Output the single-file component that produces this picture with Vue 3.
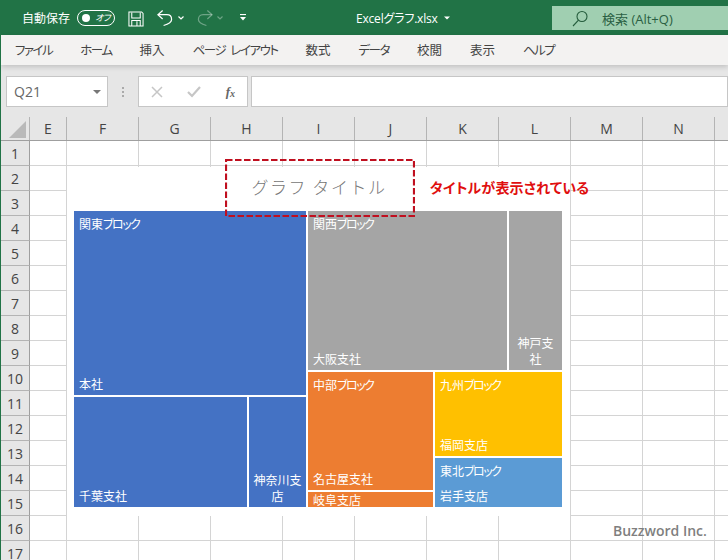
<template>
  <div class="app">
    <!-- タイトルバー -->
    <header class="titlebar">
      <span class="autosave">自動保存</span>
      <span class="toggle"><i class="knob" /><em>オフ</em></span>
      <svg class="qa save" width="16" height="16" viewBox="0 0 17 17" fill="none" stroke="#fff" stroke-width="1.100">
        <path d="M1 1h13.500l1.500 1.500V16H1z" />
        <path d="M4 1.500v6h9v-6M4 16v-6h9v6M9.500 11v5" />
      </svg>
      <svg class="qa undo" width="16" height="18" viewBox="0 0 17 18" fill="none" stroke="#fff" stroke-width="1.300">
        <path d="M6 1L1 5.500 6 10" />
        <path d="M1 5.500h9.500c3.500 0 5 2.500 5 5 0 3-3.500 5-8.500 6.500" />
      </svg>
      <svg class="caret" width="6" height="4" viewBox="0 0 6 4" fill="none" stroke="#fff" stroke-width="1.200"><path d="M.5.500L3 3l2.500-2.500" /></svg>
      <svg class="qa redo" width="16" height="18" viewBox="0 0 17 18" fill="none" stroke="#fff" stroke-opacity=".35" stroke-width="1.300">
        <path d="M11 1l5 4.500L11 10" />
        <path d="M16 5.500H6.500c-3.500 0-5 2.500-5 5 0 3 3.500 5 8.500 6.500" />
      </svg>
      <svg class="caret dim" width="6" height="4" viewBox="0 0 6 4" fill="none" stroke="#fff" stroke-opacity=".35" stroke-width="1.200"><path d="M.5.500L3 3l2.500-2.500" /></svg>
      <svg class="more" width="6" height="7" viewBox="0 0 6 7" fill="#fff"><rect width="6" height="1.100" /><path d="M0 3h6L3 6.500z" /></svg>
      <span class="filename">Excelグラフ.xlsx</span>
      <svg class="fileCaret" width="6" height="4" viewBox="0 0 6 4" fill="#fff"><path d="M0 .5h6L3 3.500z" /></svg>
      <div class="search">
        <svg width="16" height="17" viewBox="0 0 16 17" fill="none" stroke="#245c3c" stroke-width="1.100">
          <circle cx="10" cy="6.500" r="5" /><path d="M6.500 10.200L1 16" />
        </svg>
        <span>検索 (Alt+Q)</span>
      </div>
    </header>

    <!-- リボンのタブ -->
    <nav class="tabs">
      <span
        v-for="tab in tabs"
        :key="tab"
        class="tab"
        :class="{ kana: /[ァ-ヶ]/.test(tab) }"
      >{{ tab }}</span>
    </nav>

    <!-- 数式バー -->
    <div class="formula">
      <div class="namebox">
        <span>Q21</span>
        <svg width="8" height="4" viewBox="0 0 8 4" fill="#777"><path d="M0 0h8L4 4z" /></svg>
      </div>
      <div class="dots"><i /><i /><i /></div>
      <div class="fxbox">
        <svg width="12" height="12" viewBox="0 0 12 12" stroke="#c6c6c6" stroke-width="1.500"><path d="M1 1l10 10M11 1L1 11" /></svg>
        <svg width="14" height="12" viewBox="0 0 14 12" fill="none" stroke="#c6c6c6" stroke-width="2.200"><path d="M1 6l4 4 8-9" /></svg>
        <span class="fx">f<sub>x</sub></span>
      </div>
      <div class="input" />
    </div>

    <!-- シート -->
    <div class="sheet">
      <div class="colhead">
        <div class="corner"><svg width="17" height="17" viewBox="0 0 17 17" fill="#b9b9b9"><path d="M17 0v17H0z" /></svg></div>
        <div
          v-for="c in cols"
          :key="c.name"
          class="colname"
          :style="{ width: c.width + 'px' }"
        >{{ c.name }}</div>
      </div>
      <div v-for="r in rows" :key="r" class="row">
        <div class="rowname">{{ r }}</div>
        <div
          v-for="c in cols"
          :key="c.name"
          class="cell"
          :style="{ width: c.width + 'px' }"
        />
      </div>

      <!-- グラフ -->
      <div class="chart">
        <div class="title">グラフ タイトル</div>
        <div class="treemap">
          <div class="col left">
            <div class="tile blue honsha">
              <span>関東<i>ブロック</i></span><span>本社</span>
            </div>
            <div class="line fill">
              <div class="tile blue chiba"><span /><span>千葉支社</span></div>
              <div class="tile blue kanagawa"><span /><span class="wrap">神奈川支店</span></div>
            </div>
          </div>
          <div class="col right">
            <div class="line gray-row">
              <div class="tile gray osaka"><span>関西<i>ブロック</i></span><span>大阪支社</span></div>
              <div class="tile gray kobe"><span /><span class="wrap">神戸支社</span></div>
            </div>
            <div class="line fill">
              <div class="col orange-col">
                <div class="tile orange nagoya"><span>中部<i>ブロック</i></span><span>名古屋支社</span></div>
                <div class="tile orange gifu"><span>岐阜支店</span></div>
              </div>
              <div class="col last-col">
                <div class="tile yellow kyushu"><span>九州<i>ブロック</i></span><span>福岡支店</span></div>
                <div class="tile sky tohoku"><span>東北<i>ブロック</i></span><span>岩手支店</span></div>
              </div>
            </div>
          </div>
        </div>
      </div>

      <!-- 注釈 -->
      <svg class="dashed" width="190" height="58" viewBox="0 0 190 58" fill="none">
        <rect x="1" y="1" width="188" height="56" stroke="#c00f1f" stroke-width="2.200" stroke-dasharray="6.500 2.500" />
      </svg>
      <div class="note">タイトルが表示されている</div>
      <div class="mark">Buzzword Inc.</div>
    </div>
  </div>
</template>

<script setup>
const tabs = ['ファイル', 'ホーム', '挿入', 'ページ レイアウト', '数式', 'データ', '校閲', '表示', 'ヘルプ']

const cols = [
  { name: 'E', width: 37 },
  ...['F', 'G', 'H', 'I', 'J', 'K', 'L', 'M', 'N'].map((name) => ({ name, width: 72 })),
  { name: '', width: 40 }
]

const rows = Array.from({ length: 17 }, (_, i) => i + 1)
</script>

<style>
html, body { margin: 0; background: #fff; }
</style>

<style scoped>
.app {
  width: 728px;
  height: 560px;
  overflow: hidden;
  display: flex;
  flex-direction: column;
  font-family: "Noto Sans CJK JP", "Noto Sans", sans-serif;
  font-feature-settings: "palt";
  border-left: 1px solid #217346;
  box-sizing: border-box;
}

/* title bar */
.titlebar {
  height: 35px;
  margin-left: -1px;
  flex: none;
  background: #217346;
  color: #fff;
  display: flex;
  align-items: center;
  font-size: 12px;
}
.autosave { margin-left: 22px; font-feature-settings: normal; }
.toggle {
  margin-left: 7px;
  height: 14px;
  border: 1px solid #fff;
  border-radius: 8px;
  display: flex;
  align-items: center;
  justify-content: space-between;
  padding: 0 4px;
  width: 28px;
}
.knob { width: 8px; height: 8px; border-radius: 50%; background: #fff; }
.toggle em { font-size: 9px; letter-spacing: -.5px; }
.save { margin-left: 13px; margin-top: 2px; }
.undo { margin-left: 13px; margin-top: 1px; }
.caret { margin-left: 5px; }
.redo { margin-left: 13px; margin-top: 1px; }
.caret.dim { margin-left: 4px; }
.more { margin-left: 17px; }
.filename { margin-left: 110px; font-family: "Open Sans", "Noto Sans CJK JP", sans-serif; letter-spacing: -.2px; }
.fileCaret { margin-left: 6px; }
.search {
  position: absolute;
  left: 552px;
  top: 6px;
  width: 176px;
  height: 24px;
  background: #a0cfb1;
  color: #2a5f43;
  display: flex;
  align-items: center;
  font: 13px "Open Sans", "Noto Sans CJK JP", sans-serif;
}
.search svg { margin-left: 20px; }
.search span { margin-left: 14px; }

/* ribbon tabs */
.tabs {
  height: 30px;
  flex: none;
  background: #f3f2f1;
  display: flex;
  align-items: center;
  padding: 0 0 2px 14px;
  gap: 28px;
  box-sizing: border-box;
  font-size: 12.500px;
  color: #444;
  box-shadow: 0 2px 5px rgba(0, 0, 0, .16);
  position: relative;
  z-index: 1;
}
.kana { letter-spacing: -1.500px; word-spacing: 4px; }

/* formula bar */
.formula {
  height: 52px;
  flex: none;
  background: #e6e6e6;
  display: flex;
  align-items: flex-start;
  padding: 11px 0 0 5px;
  box-sizing: border-box;
}
.namebox {
  width: 102px;
  height: 31px;
  background: #fff;
  border: 1px solid #c6c6c6;
  box-sizing: border-box;
  display: flex;
  align-items: center;
  justify-content: space-between;
  padding: 0 6px 0 7px;
  font: 14px "Open Sans", sans-serif;
  color: #666;
}
.dots { width: 30px; height: 31px; display: flex; flex-direction: column; align-items: center; justify-content: center; gap: 2px; }
.dots i { width: 2px; height: 2px; background: #aaa; }
.fxbox {
  width: 110px;
  height: 31px;
  background: #fff;
  border: 1px solid #c6c6c6;
  box-sizing: border-box;
  display: flex;
  align-items: center;
  justify-content: space-between;
  padding: 0 12px;
}
.fx { font: italic bold 13px "Liberation Serif", serif; color: #666; }
.fx sub { font-size: 10px; vertical-align: -1px; }
.input {
  margin-left: 3px;
  flex: 1;
  height: 31px;
  background: #fff;
  border: 1px solid #c6c6c6;
  box-sizing: border-box;
}

/* sheet grid */
.sheet { position: relative; flex: 1; }
.colhead { height: 24px; display: flex; background: #e6e6e6; border-bottom: 1px solid #9f9f9f; box-sizing: border-box; }
.corner {
  width: 29px;
  flex: none;
  display: flex;
  align-items: flex-end;
  justify-content: flex-end;
  padding: 0 3px 2px 0;
  box-sizing: border-box;
  border-right: 1px solid #b4b4b4;
}
.colname {
  flex: none;
  box-sizing: border-box;
  border-right: 1px solid #b4b4b4;
  text-align: center;
  font: 14px/24px "Open Sans", sans-serif;
  color: #444;
}
.row { display: flex; height: 25px; }
.rowname {
  width: 29px;
  flex: none;
  background: #e6e6e6;
  box-sizing: border-box;
  border-right: 1px solid #9f9f9f;
  border-bottom: 1px solid #b4b4b4;
  text-align: center;
  font: 14px/25px "Open Sans", sans-serif;
  color: #444;
}
.cell {
  flex: none;
  box-sizing: border-box;
  border-right: 1px solid #d4d4d4;
  border-bottom: 1px solid #d4d4d4;
}

/* chart */
.chart {
  position: absolute;
  left: 66px;
  top: 50px;
  width: 503px;
  height: 349px;
  background: #fff;
}
.title {
  position: absolute;
  left: 1px;
  right: 0;
  top: 7px;
  text-align: center;
  font-size: 17px;
  letter-spacing: 1.550px;
  color: #767676;
  font-weight: 300;
  font-feature-settings: normal;
}
.treemap {
  position: absolute;
  left: 7px;
  top: 44px;
  width: 488px;
  height: 296px;
  display: flex;
  gap: 2px;
}
.col { display: flex; flex-direction: column; gap: 2px; }
.left { width: 232px; }
.right { flex: 1; }
.line { display: flex; gap: 2px; }
.fill { flex: 1; min-height: 0; }

.tile {
  display: flex;
  flex-direction: column;
  justify-content: space-between;
  box-sizing: border-box;
  padding: 5px 5px 3px;
  color: #fff;
  font-size: 12px;
  line-height: 16px;
  min-width: 0;
}
.tile i { font-style: normal; letter-spacing: -1.500px; }
.wrap { text-align: center; }
.blue { background: #4472c4; }
.gray { background: #a5a5a5; }
.orange { background: #ed7d31; }
.yellow { background: #ffc000; }
.sky { background: #5b9bd5; }

.honsha { height: 184px; }
.chiba { width: 173px; }
.kanagawa { flex: 1; padding-left: 3px; padding-right: 3px; }
.gray-row { height: 159px; }
.osaka { width: 199px; }
.kobe { flex: 1; padding-left: 4px; padding-right: 4px; }
.orange-col { width: 125px; }
.last-col { flex: 1; }
.nagoya { flex: 1; }
.gifu { height: 15px; flex: none; padding: 0 5px; justify-content: center; overflow: hidden; }
.kyushu { height: 84px; }
.tohoku { flex: 1; }

/* annotations */
.dashed {
  position: absolute;
  left: 224px;
  top: 42px;
}
.note {
  position: absolute;
  left: 429px;
  top: 60px;
  font-size: 14px;
  font-weight: 700;
  letter-spacing: .15px;
  color: #e00f0f;
}
.mark {
  position: absolute;
  left: 612px;
  top: 404px;
  font: 600 14px "Open Sans", sans-serif;
  color: #7f7f7f;
}
</style>
